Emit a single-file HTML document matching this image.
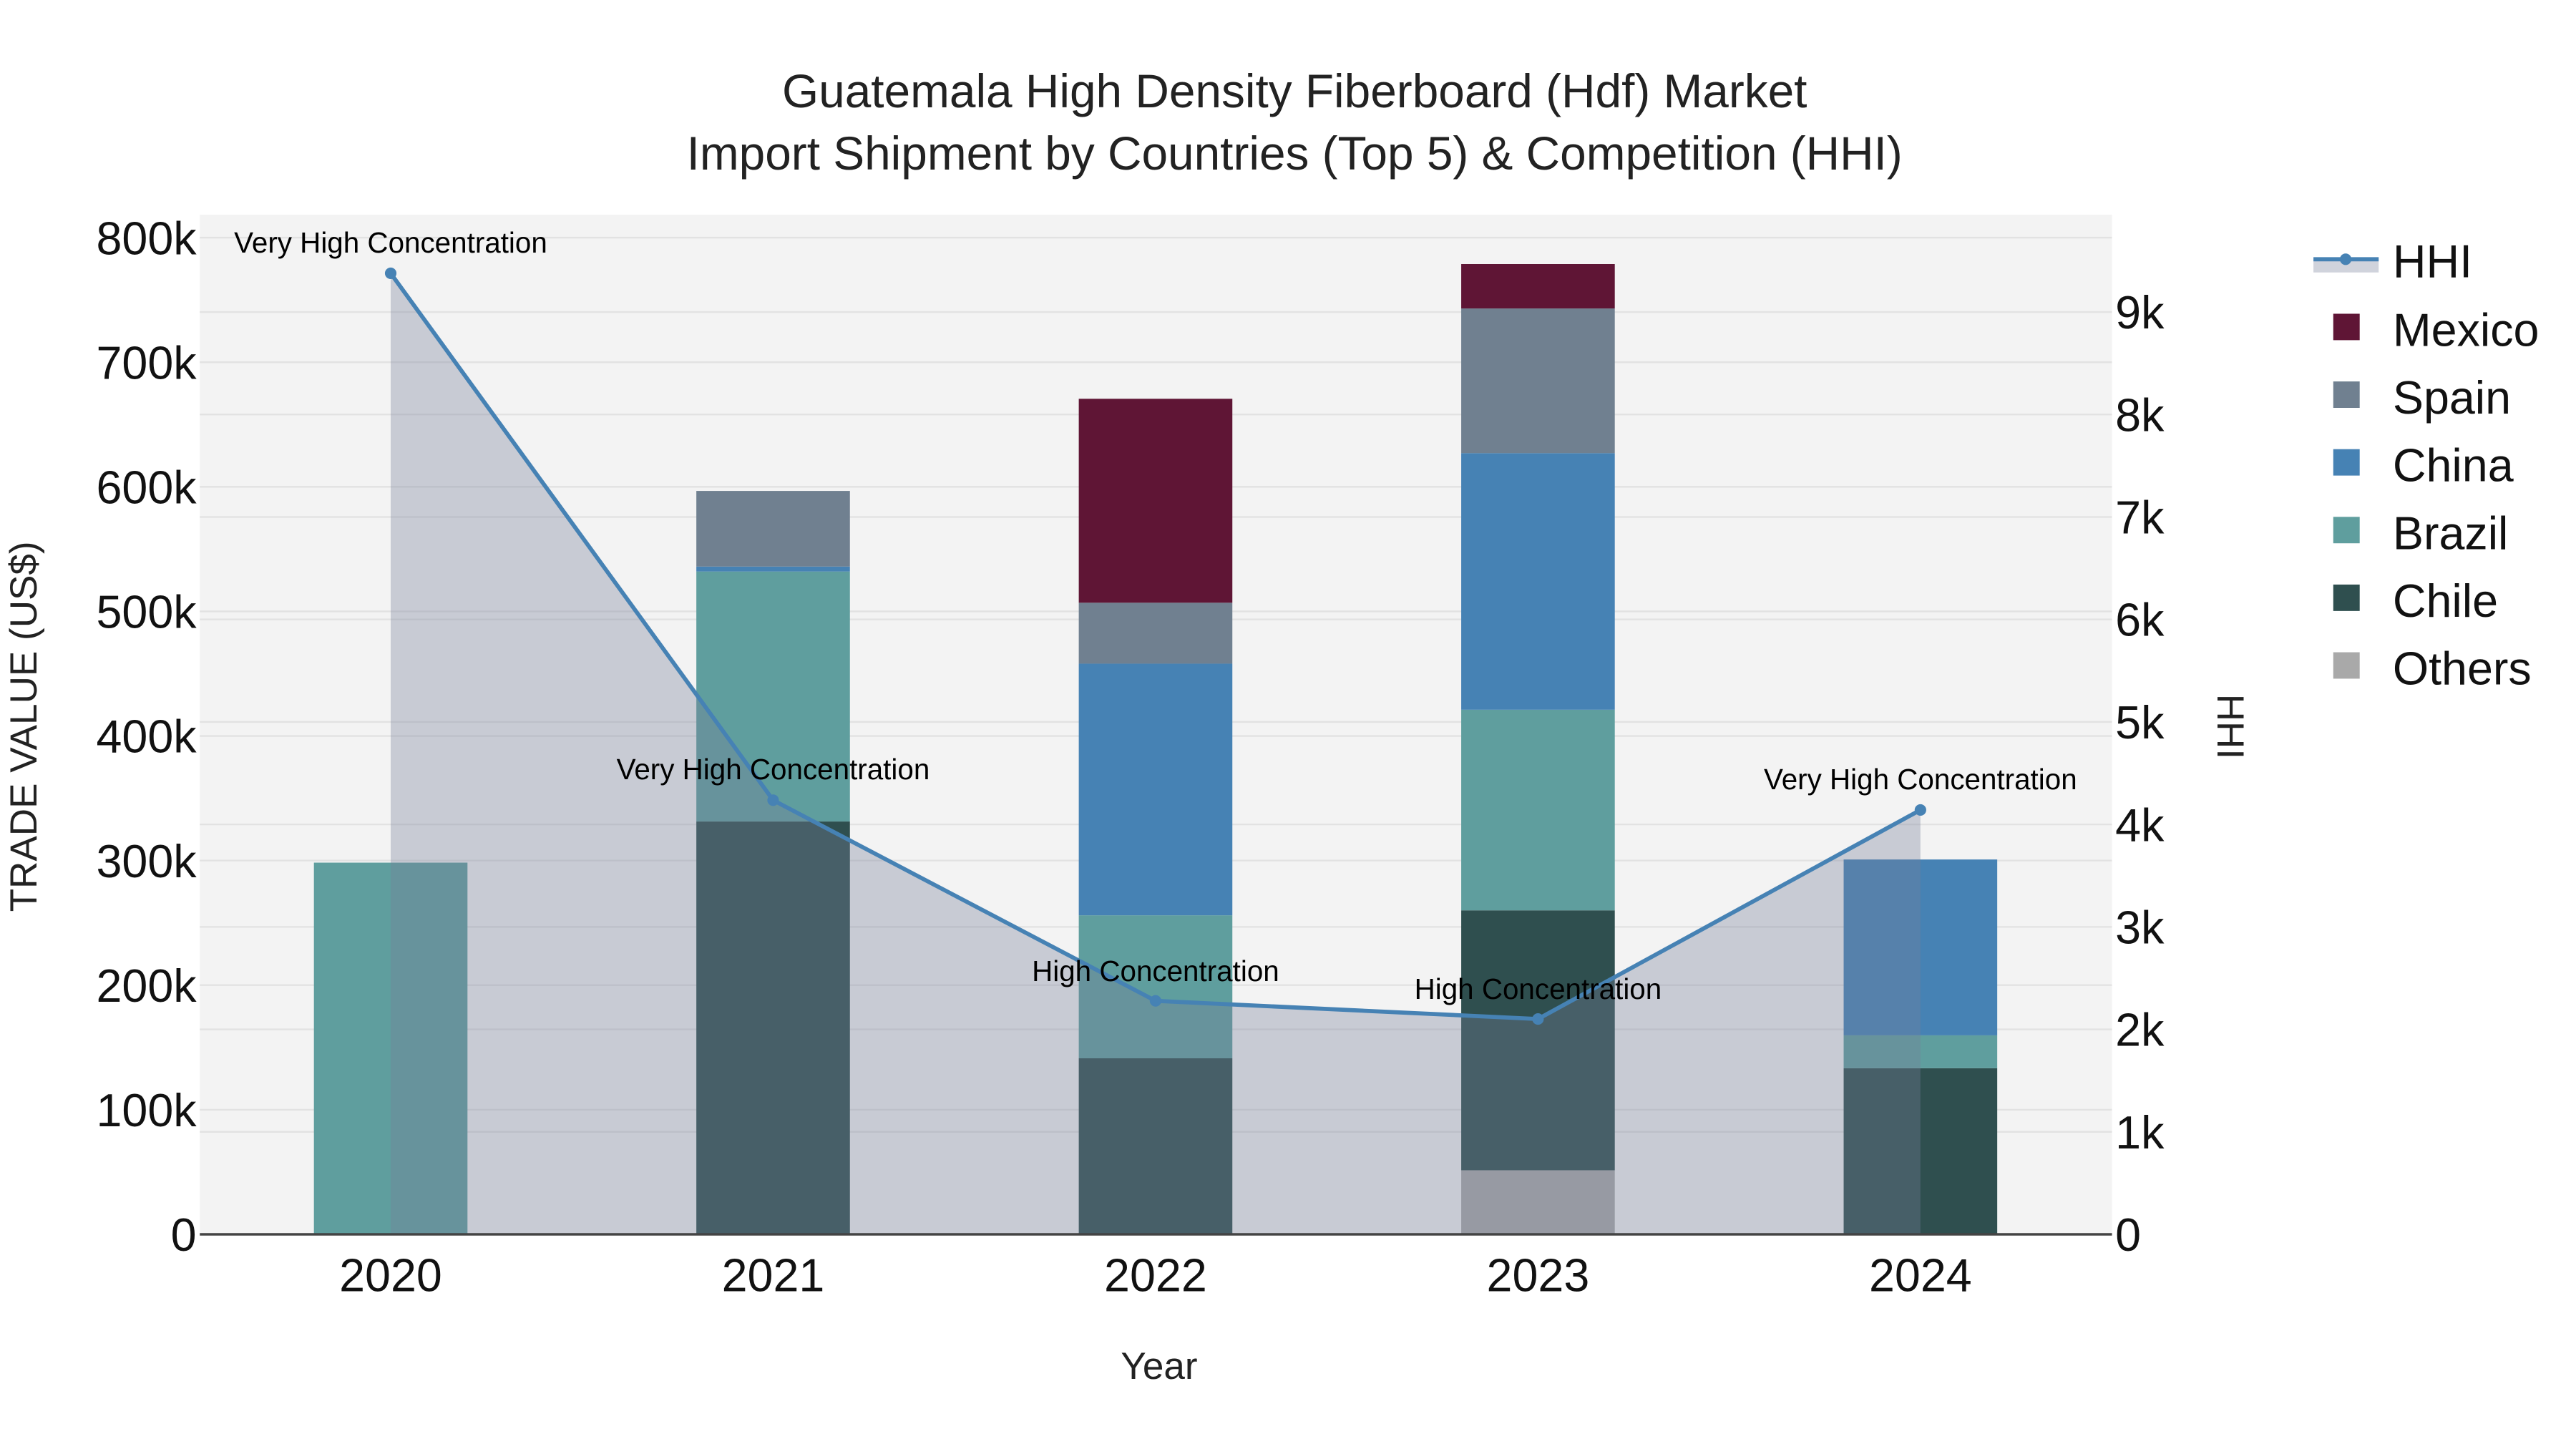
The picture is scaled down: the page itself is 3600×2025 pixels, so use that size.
<!DOCTYPE html>
<html><head><meta charset="utf-8"><style>html,body{margin:0;padding:0;background:#fff}svg{display:block}</style></head><body>
<svg width="3600" height="2025" viewBox="0 0 1560 877.5" preserveAspectRatio="none" xmlns="http://www.w3.org/2000/svg" font-family="Liberation Sans, sans-serif">
<rect width="1560" height="877.5" fill="#fff"/>
<rect x="121" y="130" width="1158" height="617.5" fill="#f3f3f3"/>
<g stroke="#e2e2e2" stroke-width="1">
<line x1="121" x2="1279" y1="672.05" y2="672.05"/><line x1="121" x2="1279" y1="596.6" y2="596.6"/><line x1="121" x2="1279" y1="521.15" y2="521.15"/><line x1="121" x2="1279" y1="445.7" y2="445.7"/><line x1="121" x2="1279" y1="370.25" y2="370.25"/><line x1="121" x2="1279" y1="294.8" y2="294.8"/><line x1="121" x2="1279" y1="219.35" y2="219.35"/><line x1="121" x2="1279" y1="143.9" y2="143.9"/>
<line x1="121" x2="1279" y1="685.44" y2="685.44"/><line x1="121" x2="1279" y1="623.38" y2="623.38"/><line x1="121" x2="1279" y1="561.32" y2="561.32"/><line x1="121" x2="1279" y1="499.26" y2="499.26"/><line x1="121" x2="1279" y1="437.2" y2="437.2"/><line x1="121" x2="1279" y1="375.14" y2="375.14"/><line x1="121" x2="1279" y1="313.08" y2="313.08"/><line x1="121" x2="1279" y1="251.02" y2="251.02"/><line x1="121" x2="1279" y1="188.96" y2="188.96"/>
</g>
<rect x="190.1" y="522.4" width="93" height="225.1" fill="#5f9e9e"/>
<rect x="421.7" y="497.5" width="93" height="250" fill="#2f4f4f"/><rect x="421.7" y="346.1" width="93" height="151.4" fill="#5f9e9e"/><rect x="421.7" y="343.1" width="93" height="3" fill="#4682b4"/><rect x="421.7" y="297.3" width="93" height="45.8" fill="#708090"/>
<rect x="653.3" y="640.9" width="93" height="106.6" fill="#2f4f4f"/><rect x="653.3" y="554.3" width="93" height="86.6" fill="#5f9e9e"/><rect x="653.3" y="401.9" width="93" height="152.4" fill="#4682b4"/><rect x="653.3" y="365" width="93" height="36.9" fill="#708090"/><rect x="653.3" y="241.5" width="93" height="123.5" fill="#5f1535"/>
<rect x="884.9" y="708.7" width="93" height="38.8" fill="#a9a9a9"/><rect x="884.9" y="551.3" width="93" height="157.4" fill="#2f4f4f"/><rect x="884.9" y="429.8" width="93" height="121.5" fill="#5f9e9e"/><rect x="884.9" y="274.4" width="93" height="155.4" fill="#4682b4"/><rect x="884.9" y="186.8" width="93" height="87.6" fill="#708090"/><rect x="884.9" y="159.9" width="93" height="26.9" fill="#5f1535"/>
<rect x="1116.5" y="646.9" width="93" height="100.6" fill="#2f4f4f"/><rect x="1116.5" y="627" width="93" height="19.9" fill="#5f9e9e"/><rect x="1116.5" y="520.5" width="93" height="106.5" fill="#4682b4"/>
<polygon points="236.6,165.5 468.2,484.6 699.8,606.1 931.4,617.1 1163,490.5 1163,747.5 236.6,747.5" fill="rgba(119,128,153,0.345)"/>
<polyline points="236.6,165.5 468.2,484.6 699.8,606.1 931.4,617.1 1163,490.5" fill="none" stroke="#4682b4" stroke-width="2.5"/>
<g fill="#4682b4"><circle cx="236.6" cy="165.5" r="3.5"/><circle cx="468.2" cy="484.6" r="3.5"/><circle cx="699.8" cy="606.1" r="3.5"/><circle cx="931.4" cy="617.1" r="3.5"/><circle cx="1163" cy="490.5" r="3.5"/></g>
<line x1="121" x2="1279" y1="747.5" y2="747.5" stroke="#444" stroke-width="1.5"/>
<g font-size="17.5" text-anchor="middle" fill="#000">
<text x="236.6" y="153">Very High Concentration</text><text x="468.2" y="472">Very High Concentration</text><text x="699.8" y="594">High Concentration</text><text x="931.4" y="605">High Concentration</text><text x="1163" y="478">Very High Concentration</text>
</g>
<g font-size="28" fill="#111" text-anchor="end">
<text x="119" y="757.5">0</text><text x="119" y="682">100k</text><text x="119" y="606.6">200k</text><text x="119" y="531.2">300k</text><text x="119" y="455.7">400k</text><text x="119" y="380.3">500k</text><text x="119" y="304.8">600k</text><text x="119" y="229.4">700k</text><text x="119" y="154">800k</text>
</g>
<g font-size="28" fill="#111">
<text x="1281" y="757.5">0</text><text x="1281" y="695.4">1k</text><text x="1281" y="633.4">2k</text><text x="1281" y="571.3">3k</text><text x="1281" y="509.3">4k</text><text x="1281" y="447.2">5k</text><text x="1281" y="385.1">6k</text><text x="1281" y="323.1">7k</text><text x="1281" y="261">8k</text><text x="1281" y="199">9k</text>
</g>
<g font-size="28" fill="#111" text-anchor="middle">
<text x="236.6" y="782">2020</text><text x="468.2" y="782">2021</text><text x="699.8" y="782">2022</text><text x="931.4" y="782">2023</text><text x="1163" y="782">2024</text>
</g>
<text x="702" y="835" font-size="23" fill="#222" text-anchor="middle">Year</text>
<text transform="translate(22,440) rotate(-90)" font-size="23" fill="#222" text-anchor="middle">TRADE VALUE (US$)</text>
<text transform="translate(1343,440) rotate(90)" font-size="23" fill="#222" text-anchor="middle">HHI</text>
<g font-size="28.5" fill="#222" text-anchor="middle">
<text x="784" y="65">Guatemala High Density Fiberboard (Hdf) Market</text>
<text x="784" y="102.6">Import Shipment by Countries (Top 5) &amp; Competition (HHI)</text>
</g>
<rect x="1401" y="157" width="39.5" height="8" fill="rgba(119,128,153,0.345)"/>
<line x1="1401" x2="1440.5" y1="157" y2="157" stroke="#4682b4" stroke-width="2.5"/><circle cx="1420.5" cy="157" r="3.5" fill="#4682b4"/>
<rect x="1413" y="190" width="16" height="16" fill="#5f1535"/>
<rect x="1413" y="231" width="16" height="16" fill="#708090"/>
<rect x="1413" y="272" width="16" height="16" fill="#4682b4"/>
<rect x="1413" y="313" width="16" height="16" fill="#5f9e9e"/>
<rect x="1413" y="354" width="16" height="16" fill="#2f4f4f"/>
<rect x="1413" y="395" width="16" height="16" fill="#a9a9a9"/>
<g font-size="28" fill="#111">
<text x="1449" y="168">HHI</text><text x="1449" y="209.5">Mexico</text><text x="1449" y="250.5">Spain</text><text x="1449" y="291.5">China</text><text x="1449" y="332.5">Brazil</text><text x="1449" y="373.5">Chile</text><text x="1449" y="414.5">Others</text>
</g>
</svg>
</body></html>
